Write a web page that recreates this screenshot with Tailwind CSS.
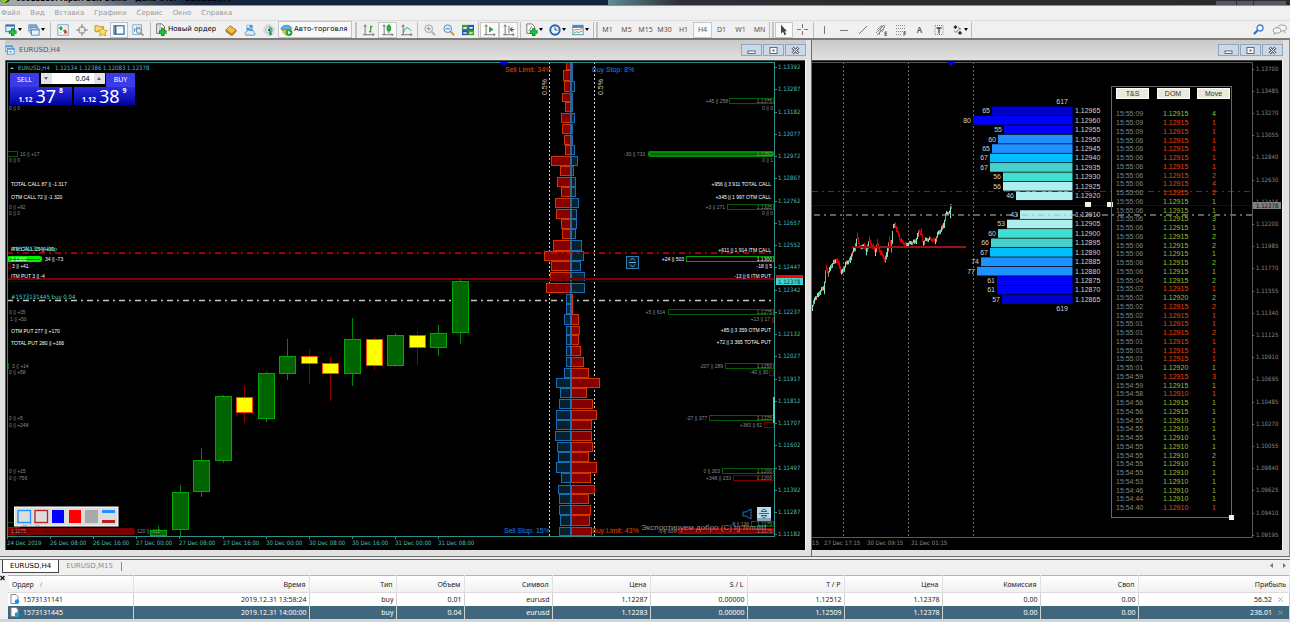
<!doctype html>
<html lang="ru">
<head>
  <meta charset="UTF-8">
  <meta name="viewport" content="width=device-width, initial-scale=1.0">
  <script src="https://cdn.jsdelivr.net/npm/@tailwindcss/browser@4"></script>
  <title>EURUSD,H4</title>
</head>
<body class="min-h-screen overflow-x-hidden bg-[#f0f0f0] font-['DejaVu_Sans',Verdana,sans-serif] text-[7px] text-[#222]">
  <!-- title bar -->
  <header class="flex h-[6px] items-end justify-between overflow-hidden border-b border-[#8d949c]">
    <div class="flex h-3 flex-1 items-center gap-1 bg-linear-to-r from-[#a3a7ab] from-10% via-[#14243c] via-32% to-[#14243c]">
      <svg class="h-3 w-3" viewBox="0 0 12 12"><circle cx="5" cy="5" r="5" fill="#1d3a10"/><path d="M1 6l3 3 6-5" stroke="#8fdc1c" stroke-width="2" fill="none"/></svg>
      <h1 class="text-[7px] leading-3 font-semibold whitespace-nowrap text-black">66913286: Alpari ECN-Demo - Демо-счет - EURUSD,H4</h1>
    </div>
    <div class="h-3 flex-1 bg-linear-to-r from-[#5f8c98] via-[#2c2e33] via-12% to-[#2a2a2c]"></div>
    <div class="flex h-3 items-start gap-px bg-[#2a2a2c] pr-1">
      <span class="mt-2 h-3 w-5 bg-[#55585e]"></span><span class="mt-2 h-3 w-4 bg-[#55585e]"></span><span class="mt-2 h-3 w-8 bg-[#55585e]"></span>
    </div>
  </header>

  <!-- menu -->
  <nav class="flex h-[14px] items-center gap-[10px] px-px leading-none text-[#9a9a9a]">
    <a href="#">Файл</a><a href="#">Вид</a><a href="#">Вставка</a><a href="#">Графики</a><a href="#">Сервис</a><a href="#">Окно</a><a href="#">Справка</a>
  </nav>

  <!-- toolbar -->
  <div id="toolbar" class="flex h-5 items-center overflow-hidden border-t border-b-2 border-t-[#dcdcdc] border-b-[#7c7c7c] pl-[2px] [&_svg]:shrink-0">
    <button aria-label="Новый график" class="flex h-4 w-[23px] items-center justify-center gap-px">
      <svg class="h-3 w-3" viewBox="0 0 14 14"><rect x="1" y="1" width="10" height="8" fill="#dff0ff" stroke="#3a73a8"/><path d="M1 2h10" stroke="#3a73a8" stroke-width="2"/><path d="M9 5v9M4.500 9.500h9" stroke="#10852a" stroke-width="4"/><path d="M9 6v7M5.500 9.500h7" stroke="#21c83c" stroke-width="2"/></svg>
      <svg class="h-[3px] w-1" viewBox="0 0 4 3"><path d="M0 0h4L2 3z"/></svg>
    </button>
    <button aria-label="Профили" class="flex h-4 w-[23px] items-center justify-center gap-px">
      <svg class="h-3 w-3" viewBox="0 0 14 14"><g fill="#eaf4fd" stroke="#4b86bd"><rect x="1" y="1" width="9" height="7"/><rect x="2.500" y="3.500" width="9" height="7"/><rect x="4" y="6" width="9" height="7"/></g><path d="M4 7h9M2 4h9M1 2h9" stroke="#4b86bd"/></svg>
      <svg class="h-[3px] w-1" viewBox="0 0 4 3"><path d="M0 0h4L2 3z"/></svg>
    </button>
    <span class="mx-[2px] h-4 w-px bg-[#bdbdbd]"></span>
    <button aria-label="Обзор рынка" class="flex h-4 w-[19px] items-center justify-center">
      <svg class="h-3 w-3" viewBox="0 0 14 14"><rect x="1" y="1" width="12" height="12" fill="#fff" stroke="#5c98cc"/><path d="M2 5l2.500-3L7 5 5 8z" fill="#22a83a"/><path d="M7 7l3-1 2 4-3 2z" fill="#e0401c"/><path d="M8 4h4M2 10h4" stroke="#b9cfe0"/></svg>
    </button>
    <button aria-label="Окно данных" class="flex h-4 w-[19px] items-center justify-center">
      <svg class="h-3 w-3" viewBox="0 0 14 14" fill="none" stroke="#777"><circle cx="7" cy="7" r="4"/><path d="M7 0v5M7 9v5M0 7h5M9 7h5"/></svg>
    </button>
    <button aria-label="Навигатор" class="flex h-4 w-[19px] items-center justify-center">
      <svg class="h-3 w-[14px]" viewBox="0 0 16 14"><path d="M1 2h4l1 1h5v6H1z" fill="#f4d676" stroke="#b98a22"/><path d="M10 4l1.800 3.300 3.700.5-2.700 2.500.7 3.700L10 12.200 6.500 14l.7-3.700L4.500 7.800l3.700-.5z" fill="#ffe14a" stroke="#b98a22" stroke-width=".8"/></svg>
    </button>
    <button aria-label="Терминал" class="flex h-4 w-[18px] items-center justify-center border border-[#c0c0c0] bg-[#f9f9f9]">
      <svg class="h-[10px] w-3" viewBox="0 0 14 12"><rect x="1" y="1" width="12" height="10" fill="#fff" stroke="#2e6ba4" stroke-width="1.500"/><path d="M3 1v10" stroke="#2e6ba4" stroke-width="2"/><path d="M6 4h5" stroke="#c3d8ea"/></svg>
    </button>
    <button aria-label="Тестер стратегий" class="flex h-4 w-5 items-center justify-center">
      <svg class="h-3 w-3" viewBox="0 0 14 14"><rect x="1" y="1" width="10" height="11" fill="#fff" stroke="#6a9dc8"/><path d="M3 9V5M5 8V3M7 6V3M9 5V3" stroke="#4474a4"/><circle cx="8" cy="8" r="3" fill="#d7ebfa" stroke="#4c7fae"/><path d="M10 10l3.500 3.500" stroke="#c8962c" stroke-width="2"/></svg>
    </button>
    <span class="mx-[2px] h-4 w-px bg-[#bdbdbd]"></span>
    <button class="flex h-4 w-[68px] items-center gap-px pl-[2px] whitespace-nowrap text-black">
      <svg class="h-[13px] w-3" viewBox="0 0 14 15"><path d="M2 1h6l3 3v8H2z" fill="#fff" stroke="#555"/><path d="M4 5h5M4 7h4M4 3h3" stroke="#999"/><path d="M9 6v9M4.500 10.500h9" stroke="#10852a" stroke-width="4"/><path d="M9 7v7M5.500 10.500h7" stroke="#21c83c" stroke-width="2"/></svg>
      Новый ордер
    </button>
    <button aria-label="MetaEditor" class="flex h-4 w-[19px] items-center justify-center">
      <svg class="h-3 w-3" viewBox="0 0 14 14"><path d="M1 7l5-5 7 5-5 5z" fill="#f0bd45" stroke="#a86e10"/><path d="M1 7v2l7 5 5-5V7l-5 5z" fill="#c98a1c" stroke="#a86e10" stroke-width=".6"/></svg>
    </button>
    <button aria-label="Сигналы" class="flex h-4 w-[19px] items-center justify-center">
      <svg class="h-3 w-3" viewBox="0 0 14 14"><rect x="3" y="1" width="7" height="7" fill="#3f94dd"/><circle cx="5" cy="3" r="1.500" fill="#fff"/><path d="M6 5h3" stroke="#fff"/><path d="M2 13a2.500 2.500 0 0 1 1-4 3 3 0 0 1 5-1 2.500 2.500 0 0 1 4 2 1.800 1.800 0 0 1 0 3z" fill="#dcebf7" stroke="#4c88bd"/></svg>
    </button>
    <button aria-label="Маркет" class="flex h-4 w-[19px] items-center justify-center">
      <svg class="h-3 w-3" viewBox="0 0 14 14" fill="none"><circle cx="7" cy="7" r="6" stroke="#b8cbd6"/><circle cx="7" cy="7" r="4" stroke="#86acc4"/><path d="M7 3a4 4 0 0 1 0 8" fill="#62b873"/><path d="M7 7l1 7 3-2z" fill="#2b9a44"/><circle cx="7" cy="7" r="1.500" fill="#376d93"/></svg>
    </button>
    <button class="flex h-[17px] w-[74px] items-center gap-px border border-[#c4c4c4] bg-[#f9f9f9] pl-px whitespace-nowrap text-black">
      <svg class="h-3 w-[13px]" viewBox="0 0 15 14"><path d="M1 5c2-4 9-5 12-1l1 1-2 2H2z" fill="#5aaee2" stroke="#2c77ae" stroke-width=".8"/><path d="M3 7c0 4 3 6 6 6s4-3 4-6z" fill="#f2cf3c" stroke="#a98413" stroke-width=".8"/><circle cx="10.500" cy="10" r="4" fill="#25a73a"/><path d="M9.300 8v4l3.200-2z" fill="#fff"/></svg>
      Авто-торговля
    </button>
    <span class="mr-[2px] ml-[3px] h-4 w-[2px] border-x border-[#c4c4c4]"></span>
    <button aria-label="Бары" class="flex h-4 w-[19px] items-center justify-center">
      <svg class="h-3 w-3" viewBox="0 0 14 14" fill="none"><path d="M2.500 1v12M0 12.500h13M1 3l1.500-2L4 3M11 11l2 1.500-2 1.500" stroke="#666"/><path d="M9 2v8M9 3h2M7 9h2" stroke="#1c9437" stroke-width="1.300"/></svg>
    </button>
    <button aria-label="Свечи" class="flex h-4 w-[19px] items-center justify-center border border-[#c8c8c8] bg-[#fafafa]">
      <svg class="h-3 w-3" viewBox="0 0 14 14" fill="none"><path d="M2.500 1v12M0 12.500h13M1 3l1.500-2L4 3M11 11l2 1.500-2 1.500" stroke="#666"/><path d="M8 0v11" stroke="#16872e"/><rect x="6" y="2" width="4" height="6" rx="1" fill="#2dbb48" stroke="#16872e"/></svg>
    </button>
    <button aria-label="Линия" class="flex h-4 w-[19px] items-center justify-center">
      <svg class="h-3 w-3" viewBox="0 0 14 14" fill="none"><path d="M2.500 1v12M0 12.500h13M1 3l1.500-2L4 3M11 11l2 1.500-2 1.500" stroke="#666"/><path d="M3 10c2-7 5-7 9-2" stroke="#1c9437"/></svg>
    </button>
    <span class="mr-[2px] ml-px h-4 w-px bg-[#bdbdbd]"></span>
    <button aria-label="Увеличить" class="flex h-4 w-[19px] items-center justify-center">
      <svg class="h-3 w-3" viewBox="0 0 14 14" fill="none"><path d="M9 9l4 4" stroke="#b5b5b5" stroke-width="2.500"/><circle cx="5.500" cy="5.500" r="4.500" fill="#eee" stroke="#999"/><path d="M3 5.500h5M5.500 3v5" stroke="#888"/></svg>
    </button>
    <button aria-label="Уменьшить" class="flex h-4 w-[19px] items-center justify-center">
      <svg class="h-3 w-3" viewBox="0 0 14 14" fill="none"><path d="M9 9l4 4" stroke="#cfa23a" stroke-width="2.500"/><circle cx="5.500" cy="5.500" r="4.500" fill="#dceefb" stroke="#3f80b8"/><path d="M3 5.500h5" stroke="#2c6da4"/></svg>
    </button>
    <button aria-label="Плитка" class="flex h-4 w-[19px] items-center justify-center">
      <svg class="h-3 w-3" viewBox="0 0 14 14"><rect x="0" y="1" width="7" height="6" fill="#3aa12a"/><rect x="7" y="1" width="7" height="6" fill="#2a56b8"/><rect x="0" y="7" width="7" height="6" fill="#2a56b8"/><rect x="7" y="7" width="7" height="6" fill="#3aa12a"/><path d="M1.500 4.500h4M8.500 4.500h4M1.500 10.500h4M8.500 10.500h4" stroke="#e5f3e0" stroke-width="2"/></svg>
    </button>
    <span class="mx-px h-4 w-px bg-[#bdbdbd]"></span>
    <button aria-label="Автопрокрутка" class="flex h-4 w-[19px] items-center justify-center border border-[#c8c8c8] bg-[#fafafa]">
      <svg class="h-3 w-3" viewBox="0 0 14 14" fill="none"><path d="M2.500 1v12M0 12.500h13M1 3l1.500-2L4 3M11 11l2 1.500-2 1.500" stroke="#666"/><path d="M6 3v7l5-3.500z" fill="#1fa33b"/></svg>
    </button>
    <button aria-label="Сдвиг графика" class="flex h-4 w-[19px] items-center justify-center border border-[#c8c8c8] bg-[#fafafa]">
      <svg class="h-3 w-3" viewBox="0 0 14 14" fill="none"><path d="M2.500 1v12M0 12.500h13M1 3l1.500-2L4 3M11 11l2 1.500-2 1.500" stroke="#666"/><path d="M7 2v9" stroke="#3876a8"/><path d="M13 6.500H9M11 4L8.500 6.500 11 9" stroke="#c23a12" stroke-width="1.300"/></svg>
    </button>
    <span class="mx-[2px] h-4 w-px bg-[#bdbdbd]"></span>
    <button aria-label="Индикаторы" class="flex h-4 w-[23px] items-center justify-center gap-px">
      <svg class="h-[13px] w-3" viewBox="0 0 14 15"><path d="M1 1h6l3 3v8H1z" fill="#fff" stroke="#666"/><path d="M3 9c2 0 2-5 4-5" stroke="#666" fill="none"/><path d="M9 6v9M4.500 10.500h9" stroke="#10852a" stroke-width="4"/><path d="M9 7v7M5.500 10.500h7" stroke="#21c83c" stroke-width="2"/></svg>
      <svg class="h-[3px] w-1" viewBox="0 0 4 3"><path d="M0 0h4L2 3z"/></svg>
    </button>
    <button aria-label="Периоды" class="flex h-4 w-[23px] items-center justify-center gap-px">
      <svg class="h-3 w-3" viewBox="0 0 14 14"><circle cx="7" cy="7" r="5.500" fill="#eaf5ff" stroke="#1d64ae" stroke-width="2.200"/><path d="M7 3.500V7h3" stroke="#333" fill="none"/></svg>
      <svg class="h-[3px] w-1" viewBox="0 0 4 3"><path d="M0 0h4L2 3z"/></svg>
    </button>
    <button aria-label="Шаблоны" class="flex h-4 w-[23px] items-center justify-center gap-px">
      <svg class="h-3 w-3" viewBox="0 0 14 14"><rect x="1" y="1.500" width="12" height="11" fill="#fff" stroke="#4883b8"/><path d="M1 3h12" stroke="#4883b8" stroke-width="3"/><path d="M2 8l3-2 3 1 4-2" stroke="#d05a20" fill="none"/><path d="M2 11l3-2 3 1 4-2" stroke="#2f9b40" fill="none"/></svg>
      <svg class="h-[3px] w-1" viewBox="0 0 4 3"><path d="M0 0h4L2 3z"/></svg>
    </button>
    <span class="mr-[2px] ml-px h-4 w-px bg-[#bdbdbd]"></span>
    <span class="h-4 w-[2px] border-x border-[#c4c4c4]"></span>
    <div class="flex font-['Noto_Sans','Open_Sans',sans-serif] leading-none text-[#555] [&>button]:flex [&>button]:items-center [&>button]:justify-center">
      <button class="h-4 w-[19px]">M1</button><button class="h-4 w-[19px]">M5</button><button class="h-4 w-[19px]">M15</button><button class="h-4 w-[19px]">M30</button><button class="h-4 w-[19px]">H1</button><button class="h-4 w-[19px] border border-[#c8c8c8] bg-[#fafafa]">H4</button><button class="h-4 w-[19px]">D1</button><button class="h-4 w-[19px]">W1</button><button class="h-4 w-[19px]">MN</button>
    </div>
    <span class="h-4 w-px bg-[#bdbdbd]"></span>
    <span class="mr-px ml-[2px] h-4 w-[2px] border-x border-[#c4c4c4]"></span>
    <button aria-label="Курсор" class="flex h-4 w-[18px] items-center justify-center border border-[#c8c8c8] bg-[#fafafa]">
      <svg class="h-3 w-2" viewBox="0 0 9 14"><path d="M1 1v10l2.500-2L5 13l2-1-1.700-3.500H8z" fill="#444"/></svg>
    </button>
    <button aria-label="Перекрестие" class="flex h-4 w-[19px] items-center justify-center">
      <svg class="h-[11px] w-[11px]" viewBox="0 0 11 11"><path d="M5.500 0v4M5.500 7v4M0 5.500h4M7 5.500h4" stroke="#777"/></svg>
    </button>
    <span class="mx-px h-4 w-px bg-[#bdbdbd]"></span>
    <button aria-label="Вертикальная линия" class="flex h-4 w-[19px] items-center justify-center"><svg class="h-[10px] w-[10px]" viewBox="0 0 10 10"><path d="M4.500 1v8" stroke="#777"/></svg></button>
    <button aria-label="Горизонтальная линия" class="flex h-4 w-[19px] items-center justify-center"><svg class="h-[10px] w-[10px]" viewBox="0 0 10 10"><path d="M1 5.500h8" stroke="#777"/></svg></button>
    <button aria-label="Трендовая линия" class="flex h-4 w-[19px] items-center justify-center"><svg class="h-[10px] w-[10px]" viewBox="0 0 10 10"><path d="M1 9l8-8" stroke="#777"/></svg></button>
    <button aria-label="Канал" class="flex h-4 w-[19px] items-center justify-center"><svg class="h-3 w-3" viewBox="0 0 12 12" fill="none"><path d="M0 9l8-8M1 11l8-8M1 6l4-4M6 1L3 11M9 1L6 8" stroke="#777" stroke-width=".8"/><path d="M11 8H9v3.500h2M9 9.700h2" stroke="#444" stroke-width=".8"/></svg></button>
    <button aria-label="Фибоначчи" class="flex h-4 w-[19px] items-center justify-center"><svg class="h-3 w-3" viewBox="0 0 12 12" fill="none"><path d="M1 1.500h10M1 4.500h10M1 7.500h10M1 10.500h6" stroke="#888" stroke-dasharray="1 1"/><path d="M11 8H9v4M9 9.700h2" stroke="#444" stroke-width=".8"/></svg></button>
    <button class="flex h-4 w-[19px] items-center justify-center font-['Noto_Sans','Open_Sans',sans-serif] text-[8px] leading-none font-semibold text-[#555]">A</button>
    <button aria-label="Метка" class="flex h-4 w-[19px] items-center justify-center"><svg class="h-3 w-[10px]" viewBox="0 0 10 12" fill="none"><rect x="1" y="1.500" width="8" height="9" stroke="#888" stroke-dasharray="1 1"/><path d="M2.500 4h5M5 4v5.500" stroke="#444" stroke-width="1.300"/></svg></button>
    <button aria-label="Стрелки" class="flex h-4 w-[23px] items-center justify-center gap-px">
      <svg class="h-[10px] w-[11px]" viewBox="0 0 12 12"><path d="M3.500 0L6 2.500 3.500 5 1 2.500z M9 7l2.500 2.500L9 12 6.500 9.500z" fill="#333"/><path d="M2 7l2 2 5-5M7 3l3 2" stroke="#555" fill="none"/></svg>
      <svg class="h-[3px] w-1" viewBox="0 0 4 3"><path d="M0 0h4L2 3z"/></svg>
    </button>
    <span class="h-4 w-px bg-[#bdbdbd]"></span>
    <div class="ml-auto flex items-center gap-2 pr-[3px]">
      <button aria-label="Поиск"><svg class="h-[11px] w-[11px]" viewBox="0 0 11 11"><path d="M5 6L1 10" stroke="#2c62c0" stroke-width="2"/><circle cx="7" cy="4" r="3" fill="#f4faff" stroke="#3f79d8" stroke-width="1.300"/></svg></button>
      <button aria-label="Чат"><svg class="h-[11px] w-[15px]" viewBox="0 0 15 11" fill="#f4f4f4" stroke="#a0a0a0"><ellipse cx="10" cy="4" rx="4.300" ry="3"/><path d="M12 7l1 2"/><ellipse cx="5" cy="6.500" rx="4" ry="2.800"/><path d="M3 9l-1 2"/></svg></button>
    </div>
  </div>

  <!-- chart windows -->
  <main class="grid grid-cols-[812fr_478fr] border-b border-[#6e6e6e] bg-[#e1e1e1]">
    <section class="border-r border-[#6a6a6a] pr-[5px] pb-[6px] pl-[5px]">
      <div class="flex h-5 items-center bg-linear-to-b from-[#c9c9c9] to-[#e0e0e0] text-[#555]">
        <svg class="h-[10px] w-[10px]" viewBox="0 0 12 12"><g fill="#f4faff" stroke="#4c92d0"><rect x="1" y="1" width="8" height="7"/><rect x="3" y="4" width="8" height="7"/></g><path d="M3 5h8M1 2h8" stroke="#4c92d0" stroke-width="1.500"/><path d="M4 9l2-2 1 2 2-2" stroke="#4c92d0" fill="none"/></svg>
        <h2 class="ml-1 flex-1">EURUSD,H4</h2>
        <div class="winbtns flex gap-px"></div>
      </div>
      <div class="relative">
        <svg id="left" class="block w-full" viewBox="5 60 801 490"></svg>
        <!-- one click trading -->
        <div class="absolute top-[13px] left-[5px] w-[125px] font-['Noto_Sans','Open_Sans',sans-serif] text-white">
          <div class="flex h-[14px] items-start justify-between">
            <button class="h-[14px] w-[29px] bg-[#3b3bea] text-[7px] leading-[12px]">SELL</button>
            <div class="flex h-[11px] w-[64px] bg-[#e4e4e4] text-black">
              <button aria-label="Меньше" class="flex w-[11px] items-center justify-center"><svg class="h-[3px] w-1" viewBox="0 0 4 3"><path d="M0 0h4L2 3z" fill="#667"/></svg></button>
              <input aria-label="Объем" value="0.04" class="min-w-0 flex-1 bg-white pr-1 text-right text-[7px] leading-none">
              <button aria-label="Больше" class="flex w-[11px] items-center justify-center"><svg class="h-[3px] w-1" viewBox="0 0 4 3"><path d="M0 3h4L2 0z" fill="#667"/></svg></button>
            </div>
            <button class="h-[14px] w-[29px] bg-[#3b3bea] text-[7px] leading-[12px]">BUY</button>
          </div>
          <div class="flex h-[18px] gap-[2px]">
            <button class="flex flex-1 items-end justify-center gap-[3px] bg-linear-to-b from-[#2b2bdc] to-[#0000a4]"><span class="text-[7px] leading-[10px] font-bold">1.12</span><span class="text-[18px] leading-[18px]">37</span><span class="self-start text-[7px] leading-[8px] font-bold">8</span></button>
            <button class="flex flex-1 items-end justify-center gap-[3px] bg-linear-to-b from-[#2b2bdc] to-[#0000a4]"><span class="text-[7px] leading-[10px] font-bold">1.12</span><span class="text-[18px] leading-[18px]">38</span><span class="self-start text-[7px] leading-[8px] font-bold">9</span></button>
          </div>
        </div>
      </div>
    </section>

    <section class="border-r border-[#8a8a8a] pr-[6px] pb-[6px]">
      <div class="flex h-5 items-center justify-end bg-linear-to-b from-[#c9c9c9] to-[#e0e0e0]">
        <div class="winbtns flex gap-px"></div>
      </div>
      <div class="relative">
        <svg id="right" class="block w-full" viewBox="812 60 471 490"></svg>
        <!-- time & sales -->
        <div class="absolute top-[26px] right-[51px] w-[121px] border border-[#696969] pb-1 font-['Liberation_Sans',Arial,sans-serif] text-[7px]">
          <div class="flex justify-between py-px pr-px pl-1 text-[#333]">
            <button class="h-[11px] w-[33px] border border-[#fff] bg-[#ece9d8] leading-none">T&amp;S</button>
            <button class="h-[11px] w-[33px] border border-[#fff] bg-[#ece9d8] leading-none">DOM</button>
            <button class="h-[11px] w-[33px] border border-[#fff] bg-[#ece9d8] leading-none">Move</button>
          </div>
          <table aria-label="T&amp;S" class="mt-[10px] h-[403px] w-full leading-[8px]"><tbody id="tape"></tbody></table>
          <span class="absolute -right-[3px] -bottom-[3px] h-[5px] w-[5px] bg-[#f4f2e6]"></span>
        </div>
      </div>
    </section>
  </main>

  <!-- chart tabs -->
  <div class="mt-[2px] flex h-[16px] items-start border-t border-[#6e6e6e] pl-[2px] leading-none">
    <button class="h-[13px] border border-t-0 border-[#444] bg-white px-[7px] text-black">EURUSD,H4</button>
    <button class="mt-[2px] ml-[7px] h-[9px] border-r border-[#888] pr-2 text-[#8c8c8c]">EURUSD,M15</button>
    <div class="mt-[3px] ml-auto flex gap-2 pr-1">
      <button aria-label="Назад"><svg class="h-[5px] w-1" viewBox="0 0 4 5"><path d="M3 0v5L0 2.500z" fill="#777"/></svg></button>
      <button aria-label="Вперед"><svg class="h-[5px] w-1" viewBox="0 0 4 5"><path d="M1 0v5l3-2.500z" fill="#777"/></svg></button>
    </div>
  </div>

  <!-- terminal -->
  <div class="flex border-b-3 border-[#d4d4d4] font-['Noto_Sans','Open_Sans',sans-serif]">
    <div class="w-2 shrink-0"><button aria-label="Закрыть" class="block"><svg class="h-[6px] w-[5px]" viewBox="0 0 5 6"><path d="M.5 1l4 4M4.500 1l-4 4" stroke="#111" stroke-width="1.300"/></svg></button></div>
    <table class="w-full table-fixed border-collapse border-t border-[#b4b4b4] bg-white text-right text-[7px] leading-none text-[#222]">
      <colgroup><col class="w-[125px]"><col class="w-[176px]"><col class="w-[87px]"><col class="w-[68px]"><col class="w-[88px]"><col class="w-[98px]"><col class="w-[97px]"><col class="w-[97px]"><col class="w-[98px]"><col class="w-[98px]"><col class="w-[98px]"><col></colgroup>
      <thead>
        <tr class="h-[17px] border-b border-[#dcdcdc] bg-linear-to-b from-white to-[#f0f0f0] [&>th]:border-r [&>th]:border-[#e2e2e2] [&>th]:pr-[3px] [&>th]:font-normal">
          <th class="pl-1 text-left">Ордер <span class="ml-1 text-[#999]">/</span></th><th>Время</th><th>Тип</th><th>Объем</th><th>Символ</th><th>Цена</th><th>S / L</th><th>T / P</th><th>Цена</th><th>Комиссия</th><th>Своп</th><th>Прибыль</th>
        </tr>
      </thead>
      <tbody id="orders"></tbody>
    </table>
  </div>

  <script>
    const T = 'DejaVu Sans Condensed, Noto Sans, sans-serif', A = 'Liberation Sans, Arial, sans-serif';
    // x, y is the vertical middle of the text
    const txt = (x, y, s, fill, size = 5, anchor = 'start', font = A, extra = '') =>
      `<text x="${x}" y="${y + size * 0.36}" fill="${fill}" font-size="${size}" text-anchor="${anchor}" font-family="${font}" ${extra}>${s}</text>`;
    const box = (x1, y1, x2, y2, fill, stroke = 'none', extra = '') =>
      `<rect x="${x1}" y="${y1}" width="${x2 - x1}" height="${y2 - y1}" fill="${fill}" stroke="${stroke}" ${extra}/>`;
    const line = (x1, y1, x2, y2, stroke, extra = '') =>
      `<line x1="${x1}" y1="${y1}" x2="${x2}" y2="${y2}" stroke="${stroke}" ${extra}/>`;
    const DASHDOT = 'stroke-dasharray="6 4 2 4"';

    document.querySelectorAll('.winbtns').forEach(el => {
      const marks = [
        ['Свернуть', '<rect x="2" y="5" width="7" height="2.500" fill="#fff" stroke="#667"/>'],
        ['Развернуть', '<rect x="2" y="1.500" width="7" height="6" fill="#fff" stroke="#667"/><rect x="4.500" y="3.500" width="2" height="2" fill="#667"/>'],
        ['Закрыть', '<path d="M2.500 1.500l6 6M8.500 1.500l-6 6" stroke="#667" stroke-width="3"/><path d="M2.500 1.500l6 6M8.500 1.500l-6 6" stroke="#fff"/>']
      ];
      el.innerHTML = marks.map(m => `<button aria-label="${m[0]}" class="flex h-3 w-[21px] items-center justify-center border border-[#93a5b8] bg-[#c9d9e8]"><svg class="h-[9px] w-[11px]" viewBox="0 0 11 9">${m[1]}</svg></button>`).join('');
    });

    // ---------- left chart ----------
    let s = box(5, 60, 806, 550, '#000') + box(5, 60, 806, 61, '#4a4a4a') + box(5, 60, 6, 550, '#5a5a5a') + box(805, 60, 806, 550, '#f4f4f4');
    const teal = '#2f8f8b', label = '#48bfba';
    s += line(549.5, 62, 549.5, 536, '#d0d0d0', 'stroke-dasharray="2 2"') + line(594.5, 62, 594.5, 536, '#d0d0d0', 'stroke-dasharray="2 2"');
    s += line(7, 300.5, 774, 300.5, '#c8c8c8', DASHDOT + ' stroke-width="1.600"');

    // volume profile: y, height, left, right
    const upper = [[62,8,566,573],[70,11,563,573],[81,11,564,575],[93,9,562,573],[102,10,565,573],[113,10,561,575],[124,10,562,573],[135,10,564,573],[145,10,565,575],[156,10,551,578],[166,10,560,574],[177,10,557,576],[187,10,561,576],[198,10,555,579],[209,10,556,577],[219,10,561,577],[229,10,562,576],[240,11,553,582],[251,10,544,584],[261,10,551,581],[272,10,550,585],[283,10,546,585]];
    const lower = [[294,10,566,573],[304,10,566,573],[314,11,564,579],[326,9,566,580],[335,10,566,579],[346,10,566,581],[357,10,566,584],[368,10,564,589],[378,10,556,600],[388,10,560,587],[399,10,559,593],[410,10,556,597],[420,10,556,592],[431,10,555,592],[442,10,557,593],[452,10,558,589],[462,11,556,597],[473,10,561,591],[485,9,558,595],[494,10,559,589],[505,10,559,591],[515,11,560,590],[527,9,559,592]];
    const red = ['#870000', '#d03800'], blue = ['#04212f', '#1a6cb4'];
    const profile = (rows, l, r) => rows.forEach(([y, h, x1, x2]) => {
      s += box(x1 + 0.5, y + 0.5, 570.5, y + h - 0.5, l[0], l[1]) + box(571.5, y + 0.5, x2 - 0.5, y + h - 0.5, r[0], r[1]);
    });
    profile(upper, red, blue);
    profile(lower, blue, red);
    s += line(571, 62, 571, 294, '#1a6cb4', 'stroke-width="1.500"') + line(570.5, 294, 570.5, 536, '#1a6cb4');

    s += line(7, 253, 774, 253, '#d80000', DASHDOT + ' stroke-width="1.600"');
    s += line(7, 279, 774, 279, '#7c0000', 'stroke-width="2"') + line(7, 281.5, 774, 281.5, '#00008c');

    // candles: x, body top, body bottom, high, low, up
    [[150,530,536,526,536,1],[172,492,530,485,536,1],[193,460,492,448,497,1],[215,396,461,395,463,1],[236,397,413,386,423,0],[258,373,419,372,422,1],[279,356,374,339,380,1],[301,356,364,349,384,0],[322,363,374,357,401,0],[344,339,374,318,386,1],[366,339,366,337,370,0],[387,335,366,333,367,1],[409,335,348,331,365,0],[430,333,348,325,356,1],[452,281,333,279,344,1]].forEach(([x, t, b, h, l, up]) => {
      s += line(x + 8.5, h, x + 8.5, l, up ? '#008800' : '#8c0000') + box(x + 0.5, t + 0.5, x + 16.5, b - 0.5, up ? '#006400' : '#ffff00', up ? '#00a800' : '#ff4000');
    });

    // option levels
    const g = '#8c8c8c', w = '#fff';
    const green = (x1, y, x2, c = '#006000') => { s += box(x1 + 0.5, y + 0.5, x2 - 0.5, y + 5.5, '#000', c); };
    const dred = (x1, y, x2) => { s += box(x1 + 0.5, y + 0.5, x2 - 0.5, y + 5.5, '#000', '#780000'); };
    green(7, 151, 18);
    s += box(7, 256, 42, 262, '#00f000', 'none', 'rx="2"') + line(10, 259.5, 40, 259.5, '#006400');
    dred(7, 263, 11); dred(7, 316, 8); green(7, 363, 9);
    green(729, 98, 774); green(727, 204, 774); green(686, 256, 774, '#00a000'); green(668, 309, 774); green(725, 363, 774); green(709, 415, 774); green(722, 468, 774); green(751, 521, 774);
    s += box(648, 151, 774, 157, '#008c00', 'none', 'rx="2"') + line(651, 154, 772, 154, '#003c00');
    dred(772, 317, 774); dred(769, 370, 774); dred(764, 422, 774); dred(733, 475, 774);
    s += box(678, 528, 774, 534, '#960000') + line(680, 531, 772, 531, '#4c0000');
    [[9,108,'0 || 0',g],[20,154,'10 || +17',g],[9,160,'0 || 0',g],[11,184,'TOTAL CALL 87 || -1 317',w],[11,197,'OTM CALL 72 || -1 320',w],[9,207,'0 || +92',g],[9,213,'0 || 0',g],[11,249,'ITM CALL 15 || +30',w],[11,259,'1.1300',w],[45,259,'34 || -73',w],[12,266,'3 || +41',w],[11,276,'ITM PUT 3 || -4',w],[9,312,'0 || +35',g],[10,319,'1 || +50',g],[11,331,'OTM PUT 277 || +170',w],[11,343,'TOTAL PUT 280 || +166',w],[12,366,'3 || +14',g],[9,372,'0 || +58',g],[9,418,'0 || +5',g],[9,425,'0 || +248',g],[9,471,'0 || +15',g],[9,478,'0 || -756',g]]
      .forEach(([x, y, t, c]) => { s += txt(x, y, t, c); });
    [[728,101,'+45 || 258',g],[772,101,'1.1375',g],[773,108,'0 || 0',g],[645,154,'-30 || 733',g],[772,154,'1.1350',g],[773,160,'0 || 1',g],[771,184,'+956 || 3 911 TOTAL CALL',w],[771,197,'+345 || 1 997 OTM CALL',w],[725,207,'+3 || 271',g],[772,207,'1.1325',g],[773,213,'0 || 0',g],[771,250,'+611 || 1 914 ITM CALL',w],[684,259,'+24 || 503',w],[772,259,'1.1300',w],[772,266,'-18 || 5',w],[771,276,'-13 || 6 ITM PUT',w],[665,312,'+5 || 614',g],[772,312,'1.1275',g],[770,319,'+13 || 17',g],[771,330,'+85 || 3 359 OTM PUT',w],[771,342,'+72 || 3 365 TOTAL PUT',w],[723,366,'-207 || 289',g],[772,366,'1.1250',g],[768,372,'-40 || 30',g],[707,418,'-27 || 377',g],[772,418,'1.1225',g],[762,425,'+383 || 62',g],[720,471,'0 || 303',g],[772,471,'1.1200',g],[731,478,'+348 || 233',g],[772,478,'1.1200',g],[749,524,'-8 || 136',g],[772,524,'1.1175',g],[676,531,'-6 || 606',g],[772,531,'1.1175',g]]
      .forEach(([x, y, t, c]) => { s += txt(x, y, t, c, 5, 'end'); });
    s += txt(11, 249, '#1573131445 tp', '#48d1cc', 6, 'start', T) + txt(11, 297, '#1573131445 buy 0.04', '#48d1cc', 6, 'start', T);

    s += txt(505, 69, 'Sell Limit: 34%', '#f04400', 7) + txt(592, 69, 'Buy Stop: 8%', '#1e86ec', 7);
    s += txt(504, 530, 'Sell Stop: 15%', '#1e86ec', 7) + txt(592, 530, 'Buy Limit: 43%', '#f04400', 7);
    s += txt(0, 0, '0.5%', '#c8c8c8', 7, 'start', A, 'transform="translate(544 95) rotate(-90)"') + txt(0, 0, '0.5%', '#c8c8c8', 7, 'start', A, 'transform="translate(600 95) rotate(-90)"');
    s += txt(641, 527, 'Экспортируем добро (C) tg:fimulid', '#909090', 8);

    // buttons drawn on the chart
    s += box(626.5, 256.5, 638.5, 268.5, '#041c2a', '#2a7fae') + '<path d="M629 262.500h7M630 260.500l2.500-2.500 2.500 2.500M630 264.500l2.500 2.500 2.500-2.500" stroke="#62aed4" fill="none"/>';
    s += '<path d="M743 512h3l5-3v10l-5-3h-3z" fill="none" stroke="#1e78b4"/>';
    s += box(757, 507, 771, 520, '#b8dcec') + box(757, 518, 771, 521, '#86a4b4') + '<path d="M759 513.500h10M761 511.500l3-2.500 3 2.500zM761 515.500l3 2.500 3-2.500z" stroke="#4a5c66" fill="none"/>';

    // lower left palette
    green(7, 522, 20);
    s += box(7, 528, 135, 535, '#780000', 'none', 'rx="2"') + line(9, 531.5, 132, 531.5, '#460000') + txt(11, 531, '1.1175', g) + txt(137, 531, '120 || -112', g);
    s += box(14.5, 507, 118, 526, '#dcdcdc', '#fff') + txt(22, 524, '12 || -11', '#a4a4a4');
    s += box(18, 510.5, 30.5, 522.5, '#dcdcdc', '#1e90ff', 'stroke-width="1.300"') + box(35, 510.5, 47.5, 522.5, '#dcdcdc', '#b22222', 'stroke-width="1.300"') + box(52, 510, 64, 523, '#0000ff') + box(69, 510, 81, 523, '#ff0000') + box(85, 510, 98, 523, '#a9a9a9') + box(102, 510, 115, 513, '#1e90ff') + box(102, 520, 115, 523, '#b22222');

    // frame and axes
    s += `<rect x="7.500" y="62.500" width="767" height="474" fill="none" stroke="${teal}"/>`;
    s += '<path d="M500 62h8l-4 4z" fill="#0000ff"/><path d="M10 69h4l-2-2z" fill="#48d1cc"/>';
    s += txt(18, 68, 'EURUSD,H4 &#160; 1.12134 1.12386 1.12083 1.12378', label, 6, 'start', T);
    ['1.13392','1.13287','1.13182','1.13077','1.12972','1.12867','1.12762','1.12657','1.12552','1.12447','1.12342','1.12237','1.12132','1.12027','1.11917','1.11812','1.11707','1.11602','1.11497','1.11392','1.11287','1.11182'].forEach((p, i) => {
      const y = Math.round(67 + i * 22.25);
      s += line(775, y + 0.5, 777, y + 0.5, teal) + txt(778, y, p, label, 6, 'start', T);
    });
    ['24 Dec 2019','26 Dec 08:00','26 Dec 16:00','27 Dec 00:00','27 Dec 08:00','27 Dec 16:00','30 Dec 00:00','30 Dec 08:00','30 Dec 16:00','31 Dec 00:00','31 Dec 08:00'].forEach((d, i) => {
      const x = Math.round(7 + i * 43.1);
      s += line(x + 0.5, 537, x + 0.5, 539, teal) + txt(x, 543, d, label, 6, 'start', T);
    });
    s += line(774, 397, 774, 423, '#48d1cc', 'stroke-width="2"') + box(776, 275, 803, 278, '#ff0000') + box(776, 278, 803, 285, '#48d1cc') + txt(778, 281.5, '1.12378', '#043a38', 6, 'start', T);
    document.getElementById('left').innerHTML = s;

    // ---------- right chart ----------
    s = box(812, 60, 1283, 550, '#000') + box(812, 60, 1283, 61, '#4a4a4a') + box(1282, 60, 1283, 550, '#f4f4f4');
    [843.5, 908.5, 973.5].forEach(x => { s += line(x, 62, x, 537, '#6e6e6e', 'stroke-dasharray="2 2"'); });
    s += '<path d="M812 62.500h440.500v475H812" fill="none" stroke="#5a5a5a"/><path d="M947 62h8l-4 4z" fill="#0000ff"/>';

    // price swings, joined by one-pixel candles
    const swing = [[812,307],[815,298],[818,295],[821,290],[824,287],[826,268],[828,273],[831,266],[833,263],[836,260],[839,265],[841,273],[844,268],[846,263],[850,260],[852,253],[855,247],[857,237],[859,245],[861,248],[864,245],[866,252],[869,240],[871,245],[873,247],[875,252],[877,243],[879,250],[882,255],[885,260],[887,252],[889,240],[891,246],[893,227],[895,225],[897,231],[900,240],[903,243],[906,245],[910,243],[914,242],[916,240],[919,231],[921,233],[923,243],[925,240],[930,239],[935,241],[938,233],[941,230],[944,223],[946,213],[950,213],[951,205]];
    for (let i = 1; i < swing.length; i++) {
      const [x0, y0] = swing[i - 1], [x1, y1] = swing[i];
      for (let x = x0; x < x1; x++) {
        const y = y0 + (y1 - y0) * (x - x0) / (x1 - x0), d = Math.abs(y1 - y0) / (x1 - x0) / 2 + 0.7, n = (x * 7) % 4;
        s += line(x + 0.5, y - d - n * 0.6, x + 0.5, y + d + (3 - n) * 0.6, y1 > y0 ? '#d80000' : (x % 3 ? '#7fe6c0' : '#c88468'));
      }
    }
    s += line(951, 204, 951, 209, '#7fe6c0');
    s += line(852, 247, 966, 247, '#961414', 'stroke-width="1.800"');

    // depth of market
    const dom = [[65,992,'1.12965','#0000cd'],[80,973,'1.12960','#0000ff'],[55,1004,'1.12955','#0000ff'],[60,998,'1.12950','#1e90ff'],[65,992,'1.12945','#1e90ff'],[67,990,'1.12940','#00bfff'],[67,990,'1.12935','#48d1cc'],[56,1003,'1.12930','#40e0d0'],[56,1003,'1.12925','#afeeee'],[46,1016,'1.12920','#afeeee'],null,[43,1020,'1.12910','#afeeee'],[53,1007,'1.12905','#afeeee'],[60,998,'1.12900','#40e0d0'],[66,991,'1.12895','#48d1cc'],[67,990,'1.12890','#00bfff'],[74,981,'1.12885','#1e90ff'],[77,977,'1.12880','#1e90ff'],[61,997,'1.12875','#0000ff'],[61,997,'1.12870','#0000ff'],[57,1002,'1.12865','#0000cd']];
    s += txt(1068, 101, '617', '#d0d0d0', 7, 'end') + txt(1068, 308, '619', '#d0d0d0', 7, 'end');
    dom.forEach((d, i) => {
      if (!d) return;
      const y = 110.7 + i * 9.43;
      s += box(d[1], y - 4.2, 1072.5, y + 4.5, d[3]) + txt(d[1] - 2, y, d[0], '#d0d0d0', 7, 'end') + txt(1075, y, d[2], '#d0d0d0', 7);
    });
    s += line(812, 191.5, 1252, 191.5, '#8c1414', DASHDOT) + line(812, 205.5, 1252, 205.5, '#0000a0') + line(814, 215, 1252, 215, '#b4b4b4', DASHDOT + ' stroke-width="1.500" opacity=".7"');
    s += box(1085, 202, 1091, 207, '#f4f2e6') + box(1107, 202, 1113, 207, '#f4f2e6');

    ['1.13700','1.13485','1.13270','1.13055','1.12840','1.12630','1.12415','1.12200','1.11985','1.11770','1.11555','1.11340','1.11125','1.10910','1.10695','1.10485','1.10270','1.10055','1.09840','1.09625','1.09410','1.09195'].forEach((p, i) => {
      const y = Math.round(68.5 + i * 22.2);
      s += line(1252, y + 0.5, 1254, y + 0.5, '#6a6a6a') + txt(1256, y, p, '#8a8a8a', 6, 'start', T);
    });
    s += box(1253, 202, 1281, 209, '#808080') + txt(1256, 205.5, '1.12378', '#111', 6, 'start', T);
    [[812,'15'],[824,'27 Dec 17:15'],[867,'30 Dec 09:15'],[911,'31 Dec 01:15']].forEach(([x, d]) => { s += txt(x, 543, d, '#8a8a8a', 6, 'start', T); });
    document.getElementById('right').innerHTML = s;

    // ---------- time & sales ----------
    const tape = '55:09 15 g4,55:09 15 r1,55:09 15 r1,55:06 15 r1,55:06 15 r1,55:06 15 r1,55:06 15 r1,55:06 15 r2,55:06 15 r4,55:06 15 r2,55:06 15 g1,55:06 15 g1,55:06 15 g3,55:06 15 g1,55:06 15 g2,55:06 15 g2,55:06 15 g1,55:06 15 g2,55:06 15 g1,55:04 15 g2,55:02 15 r1,55:02 20 g2,55:02 15 r2,55:02 15 r1,55:01 15 r1,55:01 15 r2,55:01 15 r1,55:01 15 r1,55:01 15 r1,55:01 20 g1,54:59 15 r3,54:59 15 g1,54:58 10 r1,54:56 15 g1,54:56 15 g1,54:55 10 g1,54:55 10 g1,54:55 10 g1,54:55 10 g1,54:55 10 g2,54:55 10 g1,54:55 10 g1,54:53 10 g1,54:46 10 g1,54:44 10 g1,54:40 10 r1';
    document.getElementById('tape').innerHTML = tape.split(',').map(r => {
      const [t, p, q] = r.split(' ');
      return `<tr class="${q[0] === 'g' ? 'text-[#93c232]' : 'text-[#f04400]'}"><td class="w-[47px] pl-1 text-[#858585]">15:${t}</td><td class="w-[44px] pl-1">1.129${p}</td><td class="pl-[9px]">${q[1]}</td></tr>`;
    }).join('');

    // ---------- orders ----------
    const orders = [
      ['1573131141', '2019.12.31 13:58:24', 'buy', '0.01', 'eurusd', '1.12287', '0.00000', '1.12512', '1.12378', '0.00', '0.00', '56.52'],
      ['1573131445', '2019.12.31 14:00:00', 'buy', '0.04', 'eurusd', '1.12283', '0.00000', '1.12509', '1.12378', '0.00', '0.00', '236.01']
    ];
    const page = '<svg class="h-[10px] w-[10px]" viewBox="0 0 10 10"><path d="M1 .5h5l2 2v7H1z" fill="#fff" stroke="#888"/><circle cx="7" cy="7.500" r="2.300" fill="#2293d8"/></svg>';
    document.getElementById('orders').innerHTML = orders.map((o, i) =>
      `<tr class="${i ? 'h-[13px] bg-[#41677f] text-white' : 'h-[13px]'} [&>td]:border-r [&>td]:border-[#d0d0d0] [&>td]:pr-[2px]">` + o.map((v, c) => {
        if (c === 0) return `<td><div class="flex items-center gap-[3px] pl-[2px]">${page}${v}</div></td>`;
        if (c === 11) return `<td><div class="flex items-center justify-end gap-[6px] pr-1">${v}<button aria-label="Закрыть ордер"><svg class="h-[5px] w-[5px]" viewBox="0 0 5 5"><path d="M.5.5l4 4M4.500.5l-4 4" stroke="#a0a0a0"/></svg></button></div></td>`;
        return `<td>${v}</td>`;
      }).join('') + '</tr>').join('');
  </script>
</body>
</html>
